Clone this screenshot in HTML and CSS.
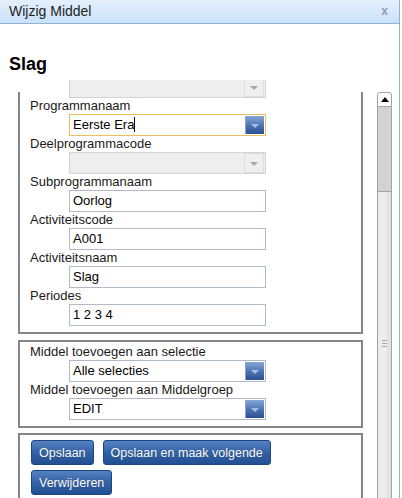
FILE: index.html
```html
<!DOCTYPE html>
<html lang="nl">
<head>
  <meta charset="UTF-8" />
  <title>Wijzig Middel</title>
  <link rel="stylesheet" href="styles.css">
</head>
<body>
  <div class="dialog">
    <div class="titlebar">
      <span class="title">Wijzig Middel</span>
      <span class="close">x</span>
    </div>
    <h1 class="heading">Slag</h1>

    <div class="pane">
      <div class="viewport">
        <div class="scroller">
          <div class="group group-main">
            <div class="field field-top">
              <div class="select disabled"><span class="value"></span><span class="caret"></span></div>
            </div>
            <div class="field">
              <label>Programmanaam</label>
              <div class="select focus"><span class="value">Eerste Era<span class="cursor"></span></span><span class="caret"></span></div>
            </div>
            <div class="field">
              <label>Deelprogrammacode</label>
              <div class="select disabled"><span class="value"></span><span class="caret"></span></div>
            </div>
            <div class="field">
              <label>Subprogrammanaam</label>
              <div class="input">Oorlog</div>
            </div>
            <div class="field">
              <label>Activiteitscode</label>
              <div class="input">A001</div>
            </div>
            <div class="field">
              <label>Activiteitsnaam</label>
              <div class="input">Slag</div>
            </div>
            <div class="field">
              <label>Periodes</label>
              <div class="input">1 2 3 4</div>
            </div>
          </div>

          <div class="group">
            <div class="field">
              <label>Middel toevoegen aan selectie</label>
              <div class="select"><span class="value">Alle selecties</span><span class="caret"></span></div>
            </div>
            <div class="field">
              <label>Middel toevoegen aan Middelgroep</label>
              <div class="select"><span class="value">EDIT</span><span class="caret"></span></div>
            </div>
          </div>

          <div class="group group-actions">
            <button class="btn">Opslaan</button>
            <button class="btn">Opslaan en maak volgende</button>
            <button class="btn">Verwijderen</button>
          </div>
        </div>
      </div>

      <div class="scrollbar">
        <div class="sb-up"><span class="arrow"></span></div>
        <div class="sb-thumb"></div>
        <div class="sb-track">
          <span class="grip"></span>
        </div>
      </div>
    </div>
  </div>
</body>
</html>
```

FILE: styles.css
```css
html, body {
  margin: 0;
  padding: 0;
  overflow: hidden;
  background: #fff;
  font-family: 'Liberation Sans', Arial, sans-serif;
}
.dialog {
  width: 399px;
  height: 498px;
  border-right: 1px solid #8db2dc;
  overflow: hidden;
  background: #fff;
}
.titlebar {
  display: flex;
  justify-content: space-between;
  height: 23px;
  line-height: 23px;
  padding: 0 11px 0 9px;
  background: linear-gradient(#e4f0fd, #c9e1f9);
  border-bottom: 1px solid #8fb3d9;
  font-size: 14px;
  color: #1e1e1e;
}
.close {
  font-size: 12px;
  font-weight: bold;
  color: #8e9cae;
}
.heading {
  margin: 0;
  padding: 29px 0 5px 9px;
  line-height: 22px;
  font-size: 18px;
  font-weight: bold;
  color: #000;
}
.pane {
  display: flex;
  height: 418px;
}
.viewport {
  position: relative;
  width: 345px;
  margin-left: 18px;
  overflow: hidden;
}
/* white strip under the heading hides the group edges while scrolled */
.viewport::before {
  content: '';
  position: absolute;
  top: 0;
  left: 0;
  right: 0;
  height: 12px;
  background: #fff;
}
.scroller {
  margin-top: -8px;
  display: flex;
  flex-direction: column;
  gap: 5px;
}
.group {
  border: 2px solid #858585;
  padding: 2px 0 6px 10px;
  font-size: 13px;
  color: #1a1a1a;
}
.group-main {
  margin-bottom: 1px;
}
.field-top .select {
  position: relative;
  z-index: 1;
}
.field label {
  display: block;
  height: 16px;
  line-height: 16px;
}
.input, .select {
  box-sizing: border-box;
  width: 197px;
  height: 22px;
  margin-left: 39px;
  border: 1px solid #b4b9c9;
  background: #fff;
  line-height: 20px;
  padding-left: 3px;
  color: #000;
}
.select {
  display: flex;
  padding-right: 1px;
}
.select .value {
  flex: 1;
}
.select .caret {
  width: 18px;
  height: 18px;
  margin-top: 1px;
  border-left: 1px solid #8aa5c8;
  background: linear-gradient(#86a6d6, #4c72b0 55%, #2b4f92);
  position: relative;
}
.select .caret::after {
  content: '';
  position: absolute;
  left: 5px;
  top: 8px;
  border-left: 4px solid transparent;
  border-right: 4px solid transparent;
  border-top: 4px solid #a9bde0;
}
.select.focus {
  border-color: #ecbf5d;
}
.cursor {
  display: inline-block;
  width: 1px;
  height: 15px;
  background: #000;
  vertical-align: -3px;
}
.select.disabled {
  background: #eeeeee;
  border-color: #d4d4d4;
}
.select.disabled .caret {
  background: #efefef;
  border: 1px solid #dcdcdc;
  margin-top: 0;
  height: 18px;
}
.select.disabled .caret::after {
  border-top-color: #a8a8a8;
}
.group-actions {
  display: flex;
  flex-wrap: wrap;
  gap: 5px 9px;
  padding: 5px 0 20px 11px;
}
.btn {
  height: 25px;
  padding: 0 7px;
  border: 1px solid #1d4680;
  border-radius: 3px;
  background: linear-gradient(#5482c2, #3462a6 50%, #214f92);
  color: #fff;
  font-family: 'Liberation Sans', Arial, sans-serif;
  font-size: 12.5px;
  text-shadow: 0 0 1px rgba(0, 0, 0, 0.4);
}
.scrollbar {
  display: flex;
  flex-direction: column;
  width: 15px;
  margin: 12px 0 0 14px;
}
.sb-up {
  box-sizing: border-box;
  height: 15px;
  border: 1px solid #a2a2a2;
  border-radius: 3px 3px 0 0;
  background: #fff;
  position: relative;
}
.sb-up .arrow {
  position: absolute;
  left: 3px;
  top: 4px;
  border-left: 4px solid transparent;
  border-right: 4px solid transparent;
  border-bottom: 5px solid #000;
}
.sb-thumb {
  height: 84px;
  background: #d3d3d3;
  border-left: 1px solid #a2a2a2;
  border-right: 1px solid #a2a2a2;
  border-bottom: 1px solid #a2a2a2;
}
.sb-track {
  flex: 1;
  background: linear-gradient(90deg, #ededed 70%, #e2e2e2 70%);
  border-left: 1px solid #a2a2a2;
  border-right: 1px solid #a2a2a2;
  display: flex;
  justify-content: center;
  padding-top: 148px;
}
.grip {
  width: 5px;
  height: 5px;
  border-top: 1px solid #a6a6a6;
  border-bottom: 1px solid #a6a6a6;
  background: linear-gradient(#ededed 2px, #a6a6a6 2px, #a6a6a6 3px, #ededed 3px);
}
```
